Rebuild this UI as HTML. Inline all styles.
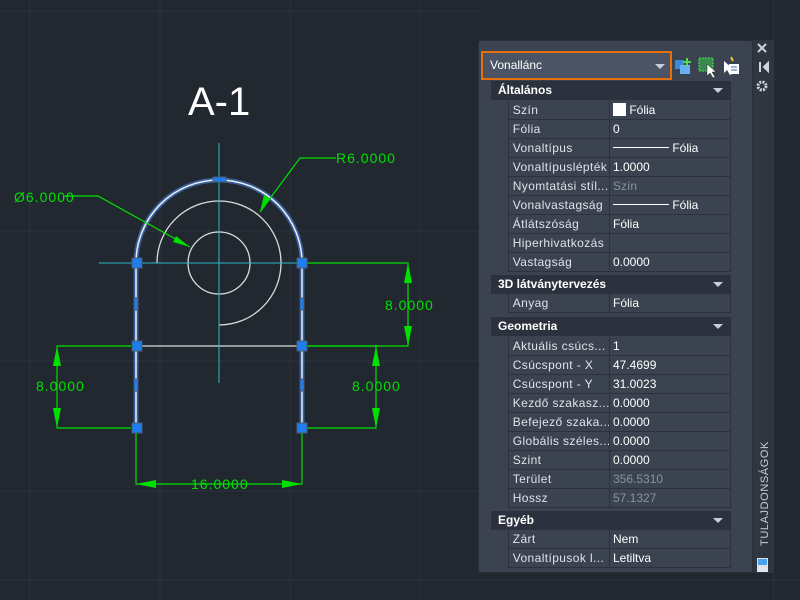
<!DOCTYPE html>
<html><head><meta charset="utf-8"><style>
*{margin:0;padding:0;box-sizing:border-box}
body{width:800px;height:600px;overflow:hidden;background:#212830;font-family:"Liberation Sans",sans-serif;position:relative}
.s{position:absolute;left:752px;top:40px;width:22px;height:533px;background:#2f3541}
.p{position:absolute;left:478px;top:40px;width:275px;height:533px;background:#3b4350;border:1px solid #2a303a;border-radius:3px}
.h{position:absolute;left:491px;width:240px;height:19px;background:#2c323d;color:#fff;font-weight:bold;font-size:12px;line-height:19px;padding-left:7px}
.h:after{content:"";position:absolute;right:8px;top:7px;border-left:5px solid transparent;border-right:5px solid transparent;border-top:5px solid #ccd;}
.r{position:absolute;left:508px;width:223px;height:19px;font-size:12px;line-height:19px;color:#dfe3ea;border-bottom:1px solid #2c323d;border-left:1px solid #2c323d;border-right:1px solid #2c323d;letter-spacing:.4px}
.r span{position:absolute;left:100px;top:0;height:19px;border-left:1px solid #2c323d;padding-left:3px;width:123px;color:#fff;letter-spacing:0}
.r .g{color:#8a92a0}
</style></head><body>
<svg width="800" height="600" style="position:absolute;left:0;top:0">
<g stroke="#2b323d" stroke-width="1">
<line x1="0" y1="11" x2="478" y2="11"/><line x1="0" y1="231" x2="478" y2="231"/><line x1="0" y1="361" x2="478" y2="361"/><line x1="0" y1="491" x2="478" y2="491"/>
<line x1="160" y1="0" x2="160" y2="600"/><line x1="290" y1="0" x2="290" y2="600"/><line x1="30" y1="0" x2="30" y2="600"/><line x1="420" y1="0" x2="420" y2="600"/>
<line x1="774" y1="0" x2="774" y2="600" /><line x1="0" y1="580" x2="800" y2="580"/></g>
<text x="188" y="115" fill="#fff" font-size="40" font-family="Liberation Sans">A-1</text>
<g fill="none" stroke="#dcdcdc" stroke-width="1.3">
<circle cx="219" cy="263" r="31"/>
<path d="M157 263 A62 62 0 1 1 219 325"/>
<line x1="136" y1="346" x2="302" y2="346"/></g>
<g stroke="#2fb6c8" stroke-width="1"><line x1="219" y1="143" x2="219" y2="383"/><line x1="99" y1="263" x2="338" y2="263"/></g>
<path d="M136 428 L136 263 A83 83 0 0 1 302 263 L302 428" fill="none" stroke="#4a7fd8" stroke-width="5" opacity=".6"/>
<path d="M136 428 L136 263 A83 83 0 0 1 302 263 L302 428" fill="none" stroke="#e8eef8" stroke-width="1.5"/>
<g stroke="#00e000" stroke-width="1.2" fill="none">
<polyline points="64,196 98,196 190,247"/>
<polyline points="336,158 300,158 260,212"/>
<polyline points="307,263 408,263 408,346 307,346"/>
<polyline points="131,346 57,346 57,428 131,428"/>
<polyline points="307,346 376,346 376,428 307,428"/>
<polyline points="136,433 136,484 302,484 302,433"/>
</g>
<g fill="#00e000">
<polygon points="190,247 173,242 176,236"/><polygon points="260,212 264,195 270,199"/>
<polygon points="408,263 404,283 412,283"/><polygon points="408,346 404,326 412,326"/>
<polygon points="57,346 53,366 61,366"/><polygon points="57,428 53,408 61,408"/>
<polygon points="376,346 372,366 380,366"/><polygon points="376,428 372,408 380,408"/>
<polygon points="136,484 156,480 156,488"/><polygon points="302,484 282,480 282,488"/>
</g>
<g fill="#00e000" font-size="14" font-family="Liberation Sans" letter-spacing="1">
<text x="14" y="202">Ø6.0000</text><text x="336" y="163">R6.0000</text>
<text x="385" y="310">8.0000</text><text x="36" y="391">8.0000</text><text x="352" y="391">8.0000</text><text x="191" y="489">16.0000</text></g>
<g fill="#1e7ef0" stroke="#4a5a70" stroke-width="1">
<rect x="132" y="258" width="10" height="10"/><rect x="297" y="258" width="10" height="10"/>
<rect x="132" y="341" width="10" height="10"/><rect x="297" y="341" width="10" height="10"/>
<rect x="132" y="423" width="10" height="10"/><rect x="297" y="423" width="10" height="10"/>
<rect x="213" y="177" width="13" height="5"/>
<rect x="134" y="298" width="4" height="12"/><rect x="300" y="298" width="4" height="12"/>
<rect x="134" y="379" width="4" height="12"/><rect x="300" y="379" width="4" height="12"/></g>
</svg>
<div class="s"></div>
<div class="p"></div>
<div style="position:absolute;left:481px;top:51px;width:191px;height:29px;border:2px solid #e8700c;background:#4a5363"></div>
<div style="position:absolute;left:484px;top:54px;width:185px;height:23px;background:#4a5465;color:#fff;font-size:12px;line-height:23px;padding-left:6px">Vonallánc</div>
<div style="position:absolute;left:655px;top:64px;border-left:5px solid transparent;border-right:5px solid transparent;border-top:5px solid #ccd"></div>
<svg width="800" height="600" style="position:absolute;left:0;top:0">
<rect x="675" y="60" width="9" height="9" fill="#3a8ad8"/><rect x="680" y="65" width="10" height="9" fill="#6ab0f0"/>
<path d="M687 58v8M683 62h8" stroke="#4ce04c" stroke-width="2"/>
<rect x="699" y="58" width="14" height="13" fill="#3a8a50" stroke="#4ce04c" stroke-dasharray="2 1"/>
<path d="M707 64l0 12 3-3 3 5 2-1-3-5 4 0z" fill="#fff" stroke="#222" stroke-width=".5"/>
<path d="M724 61l0 12 3-3 3 5 2-1-3-5 4 0z" fill="#fff"/><rect x="729" y="64" width="10" height="10" fill="#fff"/>
<path d="M731 67h6M731 70h6" stroke="#3a6ab0"/><path d="M731 57l2 4" stroke="#f0c030" stroke-width="2"/>
<path d="M758 44l8 8M766 44l-8 8" stroke="#d0d4da" stroke-width="2"/>
<path d="M760 62v10M764 67l4-4v8z" stroke="#d0d4da" fill="#d0d4da" stroke-width="2"/>
<circle cx="762" cy="86" r="4" fill="none" stroke="#d0d4da" stroke-width="3" stroke-dasharray="2 1.2"/>
<rect x="757" y="558" width="11" height="14" fill="#e0e4ea"/><rect x="758" y="559" width="9" height="6" fill="#4aa0f0"/>
<text transform="translate(768,546) rotate(-90)" fill="#c8ccd4" font-size="11" font-family="Liberation Sans" letter-spacing=".6">TULAJDONSÁGOK</text>
</svg>
<div class="h" style="top:81px">Általános</div>
<div class="r" style="top:101px">&nbsp;Szín<span><i style="display:inline-block;width:13px;height:13px;background:#fff;vertical-align:-2px"></i> Fólia</span></div>
<div class="r" style="top:120px">&nbsp;Fólia<span>0</span></div>
<div class="r" style="top:139px">&nbsp;Vonaltípus<span><i style="display:inline-block;width:56px;border-top:1px solid #fff;vertical-align:4px"></i> Fólia</span></div>
<div class="r" style="top:158px">&nbsp;Vonaltípuslépték<span>1.0000</span></div>
<div class="r" style="top:177px">&nbsp;Nyomtatási stíl...<span class="g">Szín</span></div>
<div class="r" style="top:196px">&nbsp;Vonalvastagság<span><i style="display:inline-block;width:56px;border-top:1px solid #fff;vertical-align:4px"></i> Fólia</span></div>
<div class="r" style="top:215px">&nbsp;Átlátszóság<span>Fólia</span></div>
<div class="r" style="top:234px">&nbsp;Hiperhivatkozás<span></span></div>
<div class="r" style="top:253px">&nbsp;Vastagság<span>0.0000</span></div>
<div class="h" style="top:275px">3D látványtervezés</div>
<div class="r" style="top:294px">&nbsp;Anyag<span>Fólia</span></div>
<div class="h" style="top:317px">Geometria</div>
<div class="r" style="top:337px">&nbsp;Aktuális csúcs...<span>1</span></div>
<div class="r" style="top:356px">&nbsp;Csúcspont - X<span>47.4699</span></div>
<div class="r" style="top:375px">&nbsp;Csúcspont - Y<span>31.0023</span></div>
<div class="r" style="top:394px">&nbsp;Kezdő szakasz...<span>0.0000</span></div>
<div class="r" style="top:413px">&nbsp;Befejező szaka...<span>0.0000</span></div>
<div class="r" style="top:432px">&nbsp;Globális széles...<span>0.0000</span></div>
<div class="r" style="top:451px">&nbsp;Szint<span>0.0000</span></div>
<div class="r" style="top:470px">&nbsp;Terület<span class="g">356.5310</span></div>
<div class="r" style="top:489px">&nbsp;Hossz<span class="g">57.1327</span></div>
<div class="h" style="top:511px">Egyéb</div>
<div class="r" style="top:530px">&nbsp;Zárt<span>Nem</span></div>
<div class="r" style="top:549px">&nbsp;Vonaltípusok l...<span>Letiltva</span></div>
</body></html>
